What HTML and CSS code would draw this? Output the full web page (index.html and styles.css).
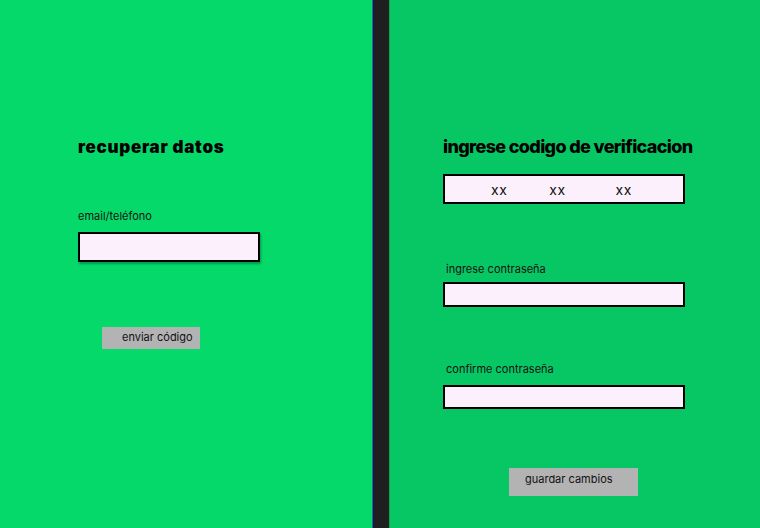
FILE: index.html
```html
<!DOCTYPE html>
<html lang="es">
<head>
<meta charset="utf-8">
<title>recuperar datos</title>
<link rel="stylesheet" href="styles.css">
</head>
<body>
<main class="screen">
  <section class="panel panel-left">
    <h1 class="title title-left">recuperar datos</h1>
    <label class="label label-email">email/teléfono</label>
    <div class="field field-email"></div>
    <div class="btn btn-send">enviar código</div>
  </section>
  <div class="divider"></div>
  <section class="panel panel-right">
    <h1 class="title title-right">ingrese codigo de verificacion</h1>
    <div class="field code">
      <span class="xx xx1">xx</span>
      <span class="xx xx2">xx</span>
      <span class="xx xx3">xx</span>
    </div>
    <label class="label label-pass">ingrese contraseña</label>
    <div class="field field-wide field-pass"></div>
    <label class="label label-confirm">confirme contraseña</label>
    <div class="field field-wide field-confirm"></div>
    <div class="btn btn-save">guardar cambios</div>
  </section>
</main>
</body>
</html>
```

FILE: styles.css
```css
* { box-sizing: border-box; }
html, body { margin: 0; padding: 0; }
body {
  width: 760px;
  height: 528px;
  overflow: hidden;
  font-family: Inter, "Liberation Sans", sans-serif;
  color: #111;
}
.screen {
  display: flex;
  width: 760px;
  height: 528px;
}
.panel {
  display: flex;
  flex-direction: column;
  align-items: flex-start;
}
.panel-left {
  width: 372px;
  background: #05d96a;
  padding: 136px 0 0 78px;
}
.divider {
  width: 18px;
  background: #1f1f1f;
  border-left: 1px solid #1d5fd0;
  border-right: 1px solid #0aa653;
}
.panel-right {
  flex: 1;
  background: #07c764;
  padding: 136px 0 0 53px;
}
.title {
  margin: 0;
  line-height: 22px;
  color: #000;
}
.title-left {
  font-size: 17px;
  font-weight: 900;
  letter-spacing: 0.7px;
}
.title-right {
  font-size: 18px;
  font-weight: 800;
  letter-spacing: -0.65px;
}
.label {
  display: block;
  font-size: 11px;
  line-height: 14px;
  color: #111;
}
.label-email { margin-top: 51px; }
.field {
  background: #fbf0fc;
  border: 2px solid #000;
}
.field-email {
  margin-top: 9px;
  width: 182px;
  height: 30px;
  box-shadow: 1px 2px 2px rgba(0,0,0,0.3);
}
.btn {
  background: #b3b3b3;
  font-size: 11px;
  line-height: 14px;
  color: #111;
}
.btn-send {
  margin: 65px 0 0 24px;
  width: 98px;
  height: 22px;
  padding: 3px 0 0 20px;
}
.code {
  margin-top: 16px;
  width: 242px;
  height: 30px;
  display: flex;
  align-items: center;
  font-size: 14px;
  letter-spacing: 0.5px;
}
.xx1 { margin-left: 46px; }
.xx2 { margin-left: 42px; }
.xx3 { margin-left: 50px; }
.label-pass { margin: 58px 0 0 3px; }
.field-wide {
  width: 242px;
  height: 25px;
}
.field-pass { margin-top: 6px; }
.label-confirm { margin: 55px 0 0 3px; }
.field-confirm { margin-top: 9px; height: 24px; }
.btn-save {
  margin: 59px 0 0 66px;
  width: 129px;
  height: 28px;
  padding: 4px 0 0 16px;
}
```
